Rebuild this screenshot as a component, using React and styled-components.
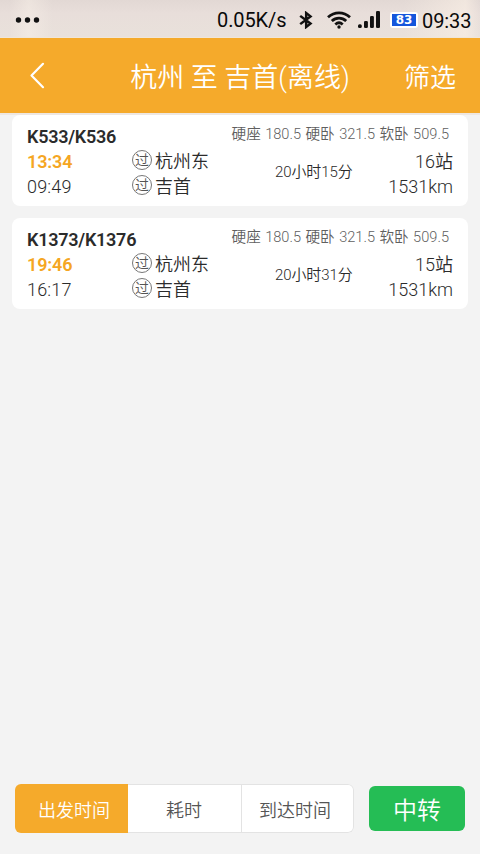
import React from "react";
import styled, { createGlobalStyle } from "styled-components";

const GlobalStyle = createGlobalStyle`
  * { box-sizing: border-box; }
  body { margin: 0; background: #f3f3f3; }
  button { font: inherit; border: 0; padding: 0; margin: 0; background: none; color: inherit; }
`;

const Screen = styled.div`
  width: 480px;
  height: 854px;
  display: flex;
  flex-direction: column;
  overflow: hidden;
  background: #f3f3f3;
  color: #2b2b2b;
  font-family: Roboto, "Noto Sans CJK SC", sans-serif;
  white-space: nowrap;
`;

const StatusBar = styled.div`
  height: 38px;
  flex: none;
  display: flex;
  align-items: center;
  padding: 2px 9px 0 15px;
  color: #0a0a0a;
  font-size: 20px;
  line-height: 36px;
  border-bottom: 1px solid #f0e6d8;
  background:
    linear-gradient(90deg, transparent 2%, rgba(255, 248, 238, 0.35) 6%, transparent 11%, transparent 84%, rgba(255, 244, 232, 0.5) 97%, transparent),
    linear-gradient(#e2d8d4, #e8deda 35%, #e9e1db);
`;

const StatusIcon = styled.svg`
  flex: none;
  width: ${(p) => p.$w}px;
  height: ${(p) => p.$h}px;
  margin-left: ${(p) => p.$gap || 0}px;
`;

const Speed = styled.span`
  margin-left: auto;
  width: 70px;
  padding-top: 1px;
  letter-spacing: -0.1px;
`;

const Battery = styled.span`
  width: 28px;
  height: 16px;
  margin-left: 10px;
  padding: 2px;
  border-radius: 3px;
  background: #fff;
`;

const BatteryLevel = styled.span`
  display: block;
  height: 12px;
  background: #1556dc;
  color: #fff;
  font-family: "DejaVu Sans", sans-serif;
  font-size: 12px;
  font-weight: 700;
  line-height: 12px;
  text-align: center;
`;

const Clock = styled.span`
  margin-left: 4px;
  width: 49px;
  padding-top: 2px;
  letter-spacing: -0.1px;
`;

const Header = styled.header`
  height: 75px;
  flex: none;
  display: grid;
  grid-template-columns: 120px 240px 120px;
  align-items: center;
  background: #f5aa2b;
  color: #fff;
  font-size: 26px;
  line-height: 38px;
`;

const BackButton = styled.button`
  height: 75px;
  padding-left: 29px;
  text-align: left;
  svg { display: block; }
`;

const Title = styled.h1`
  margin: 0;
  padding-top: 4px;
  font-size: 27px;
  font-weight: 350;
  text-align: center;
`;

const FilterButton = styled.button`
  justify-self: end;
  margin-right: 24px;
  padding-top: 4px;
  font-weight: 350;
`;

const TrainList = styled.main`
  flex: 1;
  display: flex;
  flex-direction: column;
  gap: 12px;
  padding: 0 12px;
  border-top: 2px solid #eee7e1;
`;

const Card = styled.article`
  height: 91px;
  flex: none;
  padding: 9px 15px 0;
  border-radius: 8px;
  background: #fff;
`;

const CardTop = styled.div`
  height: 25px;
  display: flex;
  justify-content: space-between;
`;

const TrainName = styled.h2`
  margin: 0;
  font-size: 18px;
  font-weight: 600;
  line-height: 26px;
  letter-spacing: -0.25px;
`;

const Prices = styled.span`
  margin-right: 4px;
  color: #5f5f5f;
  font-size: 14.6px;
  font-weight: 350;
  line-height: 21px;
  word-spacing: 0.9px;
`;

const CardBody = styled.div`
  display: grid;
  grid-template-columns: 105px 120px 125px 1fr;
  font-size: 18px;
  line-height: 25px;
`;

const Column = styled.div`
  display: flex;
  flex-direction: column;
  align-items: ${(p) => (p.$end ? "flex-end" : "flex-start")};
`;

const Time = styled.span`
  height: 25px;
  letter-spacing: ${(p) => (p.$departure ? "-0.15px" : "0.2px")};
  color: ${(p) => (p.$departure ? "#f5a623" : "#2b2b2b")};
  font-weight: ${(p) => (p.$departure ? 600 : 350)};
`;

const Station = styled.span`
  height: 25px;
  display: flex;
  align-items: center;
  gap: 3px;
  font-weight: 350;
`;

const PassBadge = styled.span`
  width: 20px;
  height: 20px;
  margin-bottom: 3px;
  border: 1px solid #777;
  border-radius: 50%;
  color: #555;
  font-size: 14px;
  line-height: 18px;
  text-align: center;
`;

const Duration = styled.span`
  padding-top: 11px;
  padding-left: 23px;
  font-size: 15px;
  font-weight: 350;
  letter-spacing: -0.1px;
`;

const Stat = styled.span`
  height: 25px;
  font-weight: 350;
`;

const BottomBar = styled.footer`
  height: 70px;
  flex: none;
  display: flex;
  align-items: flex-start;
  justify-content: space-between;
  padding: 0 15px;
`;

const SortTabs = styled.div`
  display: grid;
  grid-template-columns: 113px 114px 112px;
  height: 49px;
  border-radius: 6px;
  overflow: hidden;
`;

const SortTab = styled.button`
  border: solid #e3e3e3;
  border-width: ${(p) => (p.$active ? "0" : "1px 1px 1px 0")};
  border-radius: ${(p) => (p.$last ? "0 6px 6px 0" : "0")};
  background: ${(p) => (p.$active ? "#f5aa2b" : "#fff")};
  color: ${(p) => (p.$active ? "#fff" : "#555")};
  font-size: 18px;
  font-weight: 350;
  padding: ${(p) => (p.$active ? "1px 0 0 5px" : p.$last ? "0 5px 0 0" : "0 1px 0 0")};
`;

const TransferButton = styled.button`
  width: 96px;
  height: 45px;
  margin-top: 2px;
  border-radius: 6px;
  background: #25bd55;
  color: #fff;
  font-size: 24px;
  font-weight: 350;
`;

const trains = [
  { name: "K533/K536", depart: "13:34", arrive: "09:49", duration: "20小时15分", stops: "16站" },
  { name: "K1373/K1376", depart: "19:46", arrive: "16:17", duration: "20小时31分", stops: "15站" },
];

function TrainCard({ train }) {
  return (
    <Card>
      <CardTop>
        <TrainName>{train.name}</TrainName>
        <Prices>硬座 180.5 硬卧 321.5 软卧 509.5</Prices>
      </CardTop>
      <CardBody>
        <Column>
          <Time $departure>{train.depart}</Time>
          <Time>{train.arrive}</Time>
        </Column>
        <Column>
          <Station><PassBadge>过</PassBadge>杭州东</Station>
          <Station><PassBadge>过</PassBadge>吉首</Station>
        </Column>
        <Duration>{train.duration}</Duration>
        <Column $end>
          <Stat>{train.stops}</Stat>
          <Stat>1531km</Stat>
        </Column>
      </CardBody>
    </Card>
  );
}

export default function App() {
  return (
    <Screen>
      <GlobalStyle />
      <StatusBar>
        <StatusIcon $w={26} $h={6} viewBox="0 0 26 6" fill="#111">
          <circle cx="3.5" cy="3" r="2.7" /><circle cx="12.5" cy="3" r="2.7" /><circle cx="21.5" cy="3" r="2.7" />
        </StatusIcon>
        <Speed>0.05K/s</Speed>
        <StatusIcon $w={14} $h={18} $gap={12} viewBox="0 0 14 20" preserveAspectRatio="none" fill="none" stroke="#111" strokeWidth="2.5">
          <path d="M1.2 5.5 11.6 14 7.2 17.8V2.2L11.6 6 1.2 14.5" />
        </StatusIcon>
        <StatusIcon $w={24} $h={18} $gap={14} viewBox="0 0 24 18" fill="none" stroke="#111" strokeWidth="2.8">
          <path d="M1 6.2C7.4.3 16.6.3 23 6.2M4.8 10C9 6.1 15 6.1 19.2 10M8.3 13.5C10.5 11.5 13.5 11.5 15.7 13.5" />
          <circle cx="12" cy="16" r="1.7" fill="#111" stroke="none" />
        </StatusIcon>
        <StatusIcon $w={22} $h={17} $gap={7} viewBox="0 0 22 17" fill="#111">
          <rect x="0" y="13.2" width="3.8" height="3.8" rx="1.5" />
          <rect x="6" y="10" width="3.9" height="7" rx="1.3" />
          <rect x="12" y="5" width="3.9" height="12" rx="1.3" />
          <rect x="18" y="0" width="4" height="17" rx="1.3" />
        </StatusIcon>
        <Battery><BatteryLevel>83</BatteryLevel></Battery>
        <Clock>09:33</Clock>
      </StatusBar>
      <Header>
        <BackButton aria-label="返回">
          <svg width="16" height="27" viewBox="0 0 16 27" fill="none" stroke="#fff" strokeWidth="2.2" strokeLinecap="round" strokeLinejoin="round">
            <path d="M14 1.8 2.5 13.5 14 25.2" />
          </svg>
        </BackButton>
        <Title>杭州 至 吉首(离线)</Title>
        <FilterButton>筛选</FilterButton>
      </Header>
      <TrainList>
        {trains.map((train) => <TrainCard key={train.name} train={train} />)}
      </TrainList>
      <BottomBar>
        <SortTabs>
          <SortTab $active>出发时间</SortTab>
          <SortTab>耗时</SortTab>
          <SortTab $last>到达时间</SortTab>
        </SortTabs>
        <TransferButton>中转</TransferButton>
      </BottomBar>
    </Screen>
  );
}
